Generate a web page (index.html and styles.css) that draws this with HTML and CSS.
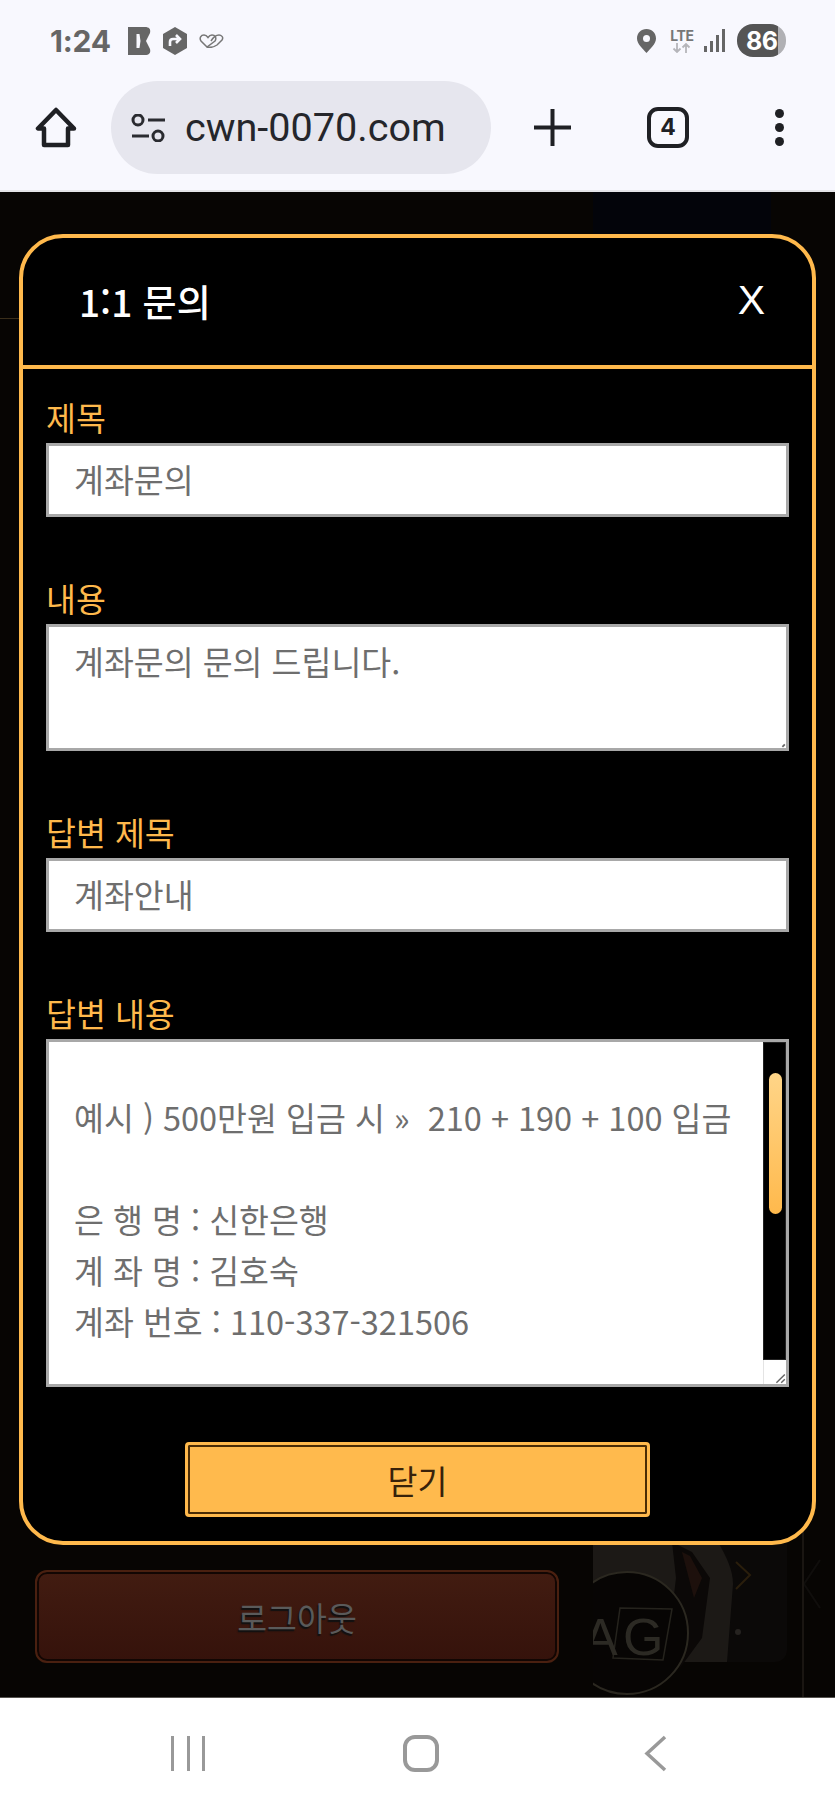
FILE: index.html
```html
<!DOCTYPE html>
<html lang="ko">

<head>
    <meta charset="UTF-8">
    <meta name="viewport" content="width=device-width, initial-scale=1.0">
    <title>1:1 문의</title>
    <link rel="stylesheet" href="styles.css">
</head>

<body>
<div class="phone">

    <div class="status-bar">
        <div class="status-left">
            <span class="clock">1:24</span>
            <svg class="ico-b" viewBox="0 0 23 28"><path d="M0 0h17c4 0 6 2 5 6l-4 8 4 8c1 4-1 6-5 6H0z" fill="#666"/><path d="M8.500 7h3l1 7-1 7h-3z" fill="#f8f8fe"/></svg>
            <svg class="ico-hex" viewBox="0 0 24 28"><path d="M12 0l12 7v14l-12 7-12-7V7z" fill="#666"/><path d="M7 19v-4c0-2 1-3 3-3h5M13 8l4 4-4 4" fill="none" stroke="#f8f8fe" stroke-width="2.600"/></svg>
            <svg class="ico-knot" viewBox="0 0 25 14"><path d="M8 13L2 7C0 4 2 1 5 1c2 0 3 1 4 2.500C10 2 11 1 13 1c3 0 5 3 3 6z" fill="none" stroke="#777" stroke-width="1.500"/><path d="M8 13c4 1 7 0 10-2l5-5c2-3-1-5-3-5-3 0-5 1-8 6" fill="none" stroke="#777" stroke-width="1.500"/></svg>
        </div>
        <div class="status-right">
            <svg class="ico-pin" viewBox="0 0 19 24"><path d="M9.500 0C4 0 0 4 0 9.500 0 15 6 20 9.500 24 13 20 19 15 19 9.500 19 4 15 0 9.500 0z" fill="#666"/><circle cx="9.500" cy="9.500" r="3.500" fill="#f8f8fe"/></svg>
            <div class="lte">
                <span class="lte-text">LTE</span>
                <svg class="lte-arrows" viewBox="0 0 20 10"><path d="M5 0v9M1.500 5.500L5 9l3.500-3.500M14 10V1M10.500 4.500L14 1l3.500 3.500" fill="none" stroke="#b5b5ba" stroke-width="1.800"/></svg>
            </div>
            <svg class="ico-signal" viewBox="0 0 22 23"><rect x="0" y="17" width="3" height="6" fill="#666"/><rect x="6" y="12" width="3" height="11" fill="#666"/><rect x="12" y="6" width="3" height="17" fill="#666"/><rect x="18" y="0" width="3" height="23" fill="#666"/></svg>
            <div class="battery"><span>86</span></div>
        </div>
    </div>

    <div class="toolbar">
        <svg class="ico-home" viewBox="0 0 42 41"><path d="M21 3L3 21.500h6V38h24V21.500h6z" fill="none" stroke="#1f2024" stroke-width="4.500" stroke-linejoin="round"/></svg>
        <div class="url-pill">
            <svg class="ico-tune" viewBox="0 0 34 28"><circle cx="7" cy="6" r="5" fill="none" stroke="#2a2b30" stroke-width="3"/><path d="M17 6h17M1 22h17" stroke="#2a2b30" stroke-width="3"/><circle cx="27" cy="22" r="5" fill="none" stroke="#2a2b30" stroke-width="3"/></svg>
            <span class="url">cwn-0070.com</span>
        </div>
        <svg class="ico-plus" viewBox="0 0 37 37"><path d="M18.500 0v37M0 18.500h37" stroke="#1f2024" stroke-width="4"/></svg>
        <div class="tab-count">4</div>
        <div class="menu-dots"><i></i><i></i><i></i></div>
    </div>

    <div class="stage">
        <svg class="backdrop" viewBox="0 0 835 1505">
            <defs><clipPath id="art"><rect x="593" y="1340" width="210" height="165"/></clipPath></defs>
            <rect x="593" y="0" width="178" height="42" fill="#03040a"/>
            <rect x="0" y="126" width="19" height="1" fill="#3a2e1a"/>
            <g clip-path="url(#art)">
                <rect x="593" y="1340" width="194" height="130" rx="12" fill="#0b0908"/>
                <path d="M593 1350h125c8 14 15 28 15 42l-6 78H593z" fill="#1c1916"/>
                <path d="M672 1350l20 10 18 26-8 60-22 30-10-40 6-50z" fill="#0b0807"/>
                <path d="M682 1360l8 4 12 22-8 20z" fill="#1d100c"/>
                <circle cx="627" cy="1441" r="61" fill="#070504" stroke="#2b2820" stroke-width="2"/>
                <path d="M620 1416l52 1-9 51-50-2z" fill="none" stroke="#25231d" stroke-width="1.500"/>
                <text x="583" y="1463" class="backdrop-logo">A</text>
                <text x="623" y="1463" class="backdrop-logo">G</text>
                <circle cx="738" cy="1440" r="3" fill="#262320"/>
            </g>
            <path d="M736 1370l14 13-14 14" fill="none" stroke="#2a1e0c" stroke-width="2"/>
            <path d="M820 1368l-16 24 16 24" fill="none" stroke="#100e0c" stroke-width="2"/>
            <rect x="802" y="1340" width="2" height="165" fill="#1a1612"/>
        </svg>
        <button class="logout-btn">로그아웃</button>

        <div class="modal-wrap">
            <div class="modal">
                <div class="modal-head">
                    <span class="modal-title">1:1 문의</span>
                    <span class="modal-close">X</span>
                </div>
                <div class="modal-body">
                    <div class="field">
                        <div class="field-label">제목</div>
                        <div class="box box-input">계좌문의</div>
                    </div>
                    <div class="field">
                        <div class="field-label">내용</div>
                        <div class="box box-area">
                            계좌문의 문의 드립니다.
                            <svg class="grip grip-float" viewBox="0 0 10 10"><path d="M9 7L7 9" stroke="#666" stroke-width="1.500"/></svg>
                        </div>
                    </div>
                    <div class="field">
                        <div class="field-label">답변 제목</div>
                        <div class="box box-input">계좌안내</div>
                    </div>
                    <div class="field">
                        <div class="field-label">답변 내용</div>
                        <div class="box box-scroll">
                            <div class="scroll-text">
                                <p>예시 ) 500만원 입금 시 »&nbsp; 210 + 190 + 100 입금</p>
                                <p>&nbsp;</p>
                                <p>은 행 명 : 신한은행</p>
                                <p>계 좌 명 : 김호숙</p>
                                <p>계좌 번호 : 110-337-321506</p>
                            </div>
                            <div class="scrollbar">
                                <div class="track"><div class="thumb"></div></div>
                                <div class="corner"><svg class="grip" viewBox="0 0 10 10"><path d="M9 2L2 9M9 6L6 9" stroke="#666" stroke-width="1.200"/></svg></div>
                            </div>
                        </div>
                    </div>
                    <div class="close-row"><button class="close-btn">닫기</button></div>
                </div>
            </div>
        </div>
    </div>

    <div class="nav-bar">
        <div class="nav-bars"><i></i><i></i><i></i></div>
        <div class="nav-home"></div>
        <svg class="nav-back" viewBox="0 0 23 37"><path d="M21 2L3 18.500 21 35" fill="none" stroke="#999" stroke-width="3.500"/></svg>
    </div>

</div>
</body>

</html>
```

FILE: styles.css
```css
* {
  box-sizing: border-box;
}
body {
  margin: 0;
  font-family: "Noto Sans CJK KR", "Noto Sans", sans-serif;
}
.phone {
  width: 835px;
  height: 1809px;
  display: flex;
  flex-direction: column;
  overflow: hidden;
}

/* status bar */
.status-bar {
  height: 81px;
  padding: 24px 49px 0 50px;
  background: #f8f8fe;
  display: flex;
  justify-content: space-between;
  align-items: flex-start;
}
.status-left, .status-right {
  display: flex;
  align-items: center;
  height: 33px;
}
.clock {
  font: 700 30px Inter, Roboto, sans-serif;
  color: #666;
  letter-spacing: -0.2px;
  width: 78px;
}
.ico-b { width: 23px; height: 28px; margin-right: 12px; }
.ico-hex { width: 24px; height: 28px; margin-right: 12px; }
.ico-knot { width: 25px; height: 14px; }
.ico-pin { width: 19px; height: 24px; margin-right: 13px; }
.lte {
  width: 26px;
  margin-right: 9px;
  display: flex;
  flex-direction: column;
  align-items: center;
}
.lte-text {
  font: 700 14px/14px Inter, sans-serif;
  color: #777;
  letter-spacing: -0.4px;
}
.lte-arrows { width: 20px; height: 10px; }
.ico-signal { width: 22px; height: 23px; margin-right: 11px; }
.battery {
  width: 49px;
  height: 33px;
  border-radius: 16px;
  background: linear-gradient(90deg, #555 0, #555 84%, #b0b0b4 84%);
  display: flex;
  align-items: center;
  padding-left: 9px;
}
.battery span {
  font: 700 25px Inter, Roboto, sans-serif;
  color: #fff;
  letter-spacing: -0.5px;
}

/* browser toolbar */
.toolbar {
  height: 111px;
  background: #f8f8fe;
  border-bottom: 2px solid #e4e4e8;
  display: flex;
  align-items: flex-start;
  padding-left: 35px;
}
.ico-home { width: 42px; height: 41px; margin-top: 26px; margin-right: 34px; }
.url-pill {
  width: 380px;
  height: 93px;
  border-radius: 47px;
  background: #e6e6ee;
  display: flex;
  align-items: center;
  padding-left: 20px;
  margin-right: 43px;
}
.ico-tune { width: 34px; height: 28px; margin-right: 20px; }
.url {
  font: 400 39.6px Roboto, sans-serif;
  color: #25262b;
}
.ico-plus { width: 37px; height: 37px; margin-top: 28px; margin-right: 76px; }
.tab-count {
  width: 42px;
  height: 41px;
  margin-top: 26px;
  margin-right: 86px;
  border: 4px solid #1f2024;
  border-radius: 11px;
  font: 700 23px/33px Inter, Roboto, sans-serif;
  color: #1f2024;
  text-align: center;
}
.menu-dots {
  margin-top: 28px;
  display: flex;
  flex-direction: column;
  gap: 5px;
}
.menu-dots i {
  display: block;
  width: 9px;
  height: 9px;
  border-radius: 50%;
  background: #1f2024;
}

/* dimmed page */
.stage {
  position: relative;
  flex: 1;
  background: #070503;
  border-bottom: 1px solid #55534f;
  display: flex;
  flex-direction: column;
  justify-content: flex-end;
  padding: 0 0 34px 35px;
}
.backdrop {
  position: absolute;
  left: 0;
  top: 0;
  width: 835px;
  height: 1505px;
}
.backdrop-logo {
  font: 400 52px "Liberation Sans", sans-serif;
  fill: #2c2a24;
}
.logout-btn {
  position: relative;
  width: 524px;
  height: 93px;
  border-radius: 12px;
  border: 2px solid #4a2010;
  box-shadow: inset 0 0 0 2px #120603;
  background: linear-gradient(#421c11, #35120b);
  font: 400 32.5px "Noto Sans CJK KR", sans-serif;
  color: #5a5a5a;
  text-shadow: -1px 2px 1px #111;
  padding: 0;
}

/* modal */
.modal-wrap {
  position: absolute;
  left: 19px;
  top: 42px;
  width: 797px;
}
.modal {
  height: 1311px;
  background: #000;
  border: 4px solid #ffb94c;
  border-radius: 44px;
  display: flex;
  flex-direction: column;
}
.modal-head {
  height: 131px;
  border-bottom: 4px solid #ffb94c;
  padding: 0 47px 2px 56px;
  display: flex;
  justify-content: space-between;
  align-items: center;
  color: #fff;
}
.modal-title { font-size: 37px; font-weight: 500; }
.modal-close { font: 400 41px "Liberation Sans", sans-serif; }
.modal-body {
  padding: 34px 23px 0;
  display: flex;
  flex-direction: column;
  gap: 67px;
}
.field-label {
  height: 40px;
  font-size: 32.5px;
  line-height: 28px;
  color: #ffb94c;
}
.box {
  background: #fff;
  border: 3px solid #a8a8a8;
  color: #6e6e6e;
  font-size: 32.5px;
}
.box-input {
  height: 74px;
  line-height: 66px;
  padding-left: 25px;
}
.box-area {
  position: relative;
  height: 127px;
  padding: 8px 25px;
  line-height: 51px;
}
.box-scroll {
  height: 348px;
  display: flex;
}
.scroll-text {
  flex: 1;
  padding: 49px 0 0 25px;
  line-height: 51px;
}
.scroll-text p {
  margin: 0;
}
.scrollbar {
  width: 23px;
  display: flex;
  flex-direction: column;
}
.track {
  flex: 1;
  background: #000;
  padding: 30px 3px 0 5px;
  border: 1px solid #222;
}
.thumb {
  height: 141px;
  border-radius: 8px;
  background: linear-gradient(#ffd588, #ffb94c);
}
.corner {
  height: 24px;
  display: flex;
  justify-content: flex-end;
  align-items: flex-end;
  border-left: 1px solid #e4e4e4;
}
.grip {
  width: 12px;
  height: 12px;
}
.grip-float {
  position: absolute;
  right: 0;
  bottom: 0;
}
.close-row {
  display: flex;
  justify-content: center;
  margin-top: -12px;
}
.close-btn {
  width: 465px;
  height: 75px;
  border: 3px solid #ffb94c;
  border-radius: 4px;
  box-shadow: inset 0 0 0 2px #4a2c05;
  background: #ffba4d;
  font: 400 32.5px "Noto Sans CJK KR", sans-serif;
  color: #38220a;
  padding: 0;
}

/* android nav */
.nav-bar {
  height: 111px;
  background: #fff;
  position: relative;
  display: flex;
  align-items: center;
  padding: 0 0 0 171px;
}
.nav-bars {
  display: flex;
  gap: 12.5px;
  width: 232px;
}
.nav-bars i {
  display: block;
  width: 3px;
  height: 35px;
  background: #999;
}
.nav-home {
  width: 36px;
  height: 37px;
  border: 4px solid #999;
  border-radius: 12px;
  margin-right: 205px;
}
.nav-back {
  width: 23px;
  height: 37px;
}
```
